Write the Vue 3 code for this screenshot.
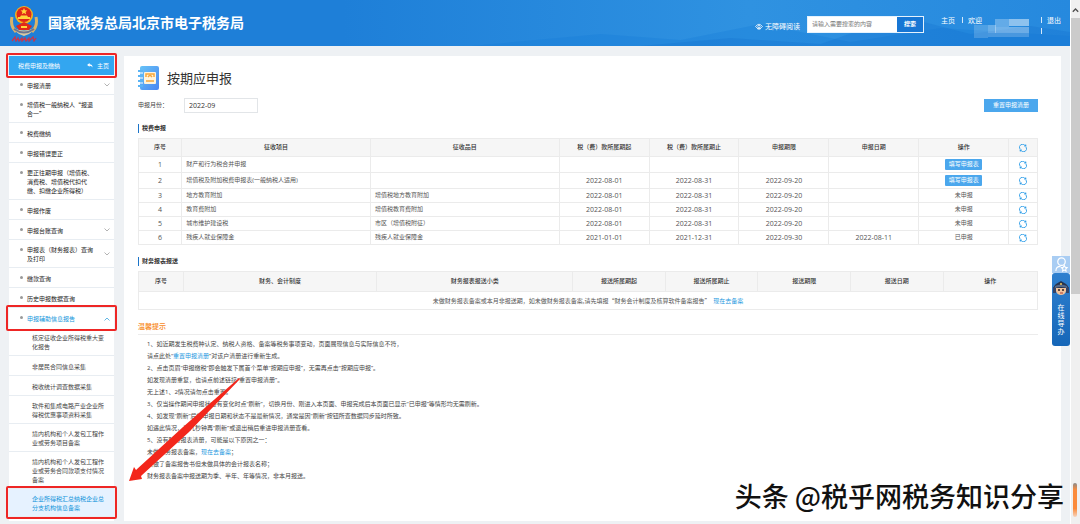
<script setup>
import { ref } from 'vue'

const month = ref('2022-09')
const keyword = ref('')

const menu = [
  { lines: ['申报清册'], arrow: 'down' },
  { lines: ['增值税一般纳税人“报退', '合一”'] },
  { lines: ['税费缴纳'] },
  { lines: ['申报错误更正'] },
  { lines: ['更正往期申报（增值税、', '消费税、增值税代扣代', '缴、扣缴企业所得税）'] },
  { lines: ['申报作废'] },
  { lines: ['申报台账查询'], arrow: 'down' },
  { lines: ['申报表（财务报表）查询', '及打印'], arrow: 'down' },
  { lines: ['缴款查询'] },
  { lines: ['历史申报数据查询'] },
  { lines: ['申报辅助信息报告'], arrow: 'up', open: true, marked: true },
]

const submenu = [
  { lines: ['核定征收企业所得税重大变', '化报告'] },
  { lines: ['非居民合同信息采集'] },
  { lines: ['税收统计调查数据采集'] },
  { lines: ['软件和集成电路产业企业所', '得税优惠事项资料采集'] },
  { lines: ['境内机构和个人发包工程作', '业或劳务项目备案'] },
  { lines: ['境内机构和个人发包工程作', '业或劳务合同款项支付情况', '备案'] },
  { lines: ['企业所得税汇总纳税企业总', '分支机构信息备案'], active: true },
]

const taxHead = ['序号', '征收项目', '征收品目', '税（费）款所属期起', '税（费）款所属期止', '申报期限', '申报日期', '操作']
const taxRows = [
  { item: '财产和行为税合并申报', sub: '', from: '', to: '', due: '', date: '', action: true },
  { item: '增值税及附加税费申报表(一般纳税人适用)', sub: '', from: '2022-08-01', to: '2022-08-31', due: '2022-09-20', date: '', action: true },
  { item: '地方教育附加', sub: '增值税地方教育附加', from: '2022-08-01', to: '2022-08-31', due: '2022-09-20', date: '', state: '未申报' },
  { item: '教育费附加', sub: '增值税教育费附加', from: '2022-08-01', to: '2022-08-31', due: '2022-09-20', date: '', state: '未申报' },
  { item: '城市维护建设税', sub: '市区（增值税附征）', from: '2022-08-01', to: '2022-08-31', due: '2022-09-20', date: '', state: '未申报' },
  { item: '残疾人就业保障金', sub: '残疾人就业保障金', from: '2021-01-01', to: '2021-12-31', due: '2022-09-30', date: '2022-08-11', state: '已申报' },
]

const reportHead = ['序号', '财务、会计制度', '财务报表报送小类', '报送所属期起', '报送所属期止', '报送期限', '报送日期', '操作']
</script>

<template>
  <div class="page">
    <div class="view">
      <header class="top">
        <svg class="hills" viewBox="0 0 600 46" preserveAspectRatio="none" aria-hidden="true">
          <path d="M0 46 L130 34 L210 40 L290 24 L380 42 L470 28 L600 36 V46Z" fill="#1479d6" opacity=".3" />
          <path d="M170 46 L260 38 L350 44 L430 16 L500 34 L560 26 L600 32 V46Z" fill="#0f6dcc" opacity=".25" />
        </svg>
        <svg class="emblem" viewBox="0 0 30 38" aria-hidden="true">
          <path d="M2 19 Q4 29 15 32 Q26 29 28 19 L25 24 Q15 29 5 24Z" fill="#d9c8a3" />
          <path d="M3 13 Q1 22 7 28 M27 13 Q29 22 23 28" stroke="#d8b36a" stroke-width="3" fill="none" />
          <path d="M5 25 Q15 32 25 25" stroke="#6b7590" stroke-width="2" fill="none" />
          <circle cx="15" cy="11" r="9" fill="#f3b51f" />
          <circle cx="15" cy="10.500" r="7.500" fill="#e02819" />
          <path d="M15 4 l1 2.200 2.400 .2 -1.800 1.600 .6 2.300 -2.200 -1.200 -2.200 1.200 .6 -2.300 -1.800 -1.600 2.400 -.2z" fill="#ffd53b" />
          <path d="M9 15 H21 V13 H19 L18 11.500 H12 L11 13 H9Z" fill="#ffd53b" />
          <path d="M7 22 L15 18 L23 22 L20 26 H10Z" fill="#e02819" />
          <path d="M12 23 h6" stroke="#ffd53b" stroke-width="2" />
          <path d="M3 37 l3 -4 1 4 2 -3 1 3 3 -3 0 3 3 -3 1 3 3 -3 0 3 4 -4 1 4 2 -3" stroke="#c5364f" stroke-width="1.300" fill="none" />
        </svg>
        <h1>国家税务总局北京市电子税务局</h1>
        <a class="access" href="#">
          <svg viewBox="0 0 16 14" aria-hidden="true"><path d="M1 7 Q8 -2 15 7 Q8 16 1 7Z M4 11 Q8 14 12 11" fill="none" stroke="#fff" stroke-width="1.500" /><circle cx="8" cy="7" r="2.500" fill="none" stroke="#fff" stroke-width="1.500" /></svg>
          无障碍阅读
        </a>
        <form class="search" @submit.prevent>
          <input v-model="keyword" type="text" placeholder="请输入需要搜索的内容" aria-label="搜索内容" />
          <button type="submit">搜索</button>
        </form>
        <nav class="user">
          <a href="#">主页</a><i class="bar"></i><span class="hello">欢迎</span>
          <svg class="mosaic" viewBox="0 0 62 22" aria-hidden="true">
            <g fill="#fff">
              <path d="M21 3h14v8H21z" opacity=".28" /><path d="M35 3h20v7H35z" opacity=".48" />
              <path d="M0 9h14v13H0z" opacity=".18" /><path d="M14 9h8v8h-8z" opacity=".3" />
              <path d="M21 11h34v6H21z" opacity=".34" /><path d="M14 17h41v4H14z" opacity=".2" />
            </g>
          </svg>
          <span class="bars"><i class="bar"></i><i class="bar"></i></span><a href="#">退出</a>
        </nav>
      </header>

      <div class="body">
        <aside class="side">
          <div class="side-title marked">
            <span>税费申报及缴纳</span>
            <a href="#"><svg viewBox="0 0 14 12" aria-hidden="true"><path d="M6 0 L0 5 L6 9 V6.500 Q11 6 13 11 Q13 3 6 3Z" fill="#fff" /></svg>主页</a>
          </div>
          <ul>
            <li v-for="m in menu" :key="m.lines[0]" :class="{ open: m.open, marked: m.marked }">
              <a href="#"><span v-for="l in m.lines" :key="l">{{ l }}</span></a>
              <svg v-if="m.arrow" class="chev" viewBox="0 0 12 8" aria-hidden="true">
                <path :d="m.arrow === 'up' ? 'M1 7 L6 2 L11 7' : 'M1 1 L6 6 L11 1'" fill="none" stroke="currentColor" stroke-width="1.500" />
              </svg>
            </li>
          </ul>
          <ul class="sub">
            <li v-for="(m, i) in submenu" :key="i" :class="{ active: m.active, marked: m.active }">
              <a href="#"><span v-for="l in m.lines" :key="l">{{ l }}</span></a>
            </li>
          </ul>
        </aside>

        <main class="panel">
          <div class="title">
            <svg viewBox="0 0 22 24" aria-hidden="true">
              <defs><linearGradient id="book" x1="0" y1="0" x2="1" y2="1"><stop offset="0" stop-color="#67c3f7" /><stop offset="1" stop-color="#4a86f2" /></linearGradient></defs>
              <path d="M4 0 H19 Q21 0 21 2 V22 Q21 24 19 24 H4 Q2 24 2 22 V2 Q2 0 4 0Z" fill="url(#book)" />
              <path d="M0 5h5M0 10h5M0 15h5M0 20h5" stroke="#5ab4f5" stroke-width="2" />
              <path d="M2 7h3M2 12h3M2 17h3" stroke="#fff" stroke-width="1" />
              <rect x="6" y="6" width="12" height="12" rx="1" fill="#fff4dc" />
              <path d="M8 11 V8 H16 V11 M10 11 Q12 8 14 11 M8 15 H16" stroke="#f6a63b" stroke-width="1.500" fill="none" />
            </svg>
            <h2>按期应申报</h2>
          </div>
          <div class="filter">
            <label for="month">申报月份：</label>
            <input id="month" v-model="month" type="text" />
            <button type="button">重置申报清册</button>
          </div>

          <h3>税费申报</h3>
          <table class="tax">
            <colgroup>
              <col class="w43" /><col class="w189" /><col class="w189" /><col class="w90" /><col class="w90" /><col class="w90" /><col class="w90" /><col class="w90" /><col />
            </colgroup>
            <thead>
              <tr>
                <th v-for="h in taxHead" :key="h">{{ h }}</th>
                <th><button class="refresh" type="button" aria-label="刷新"><svg viewBox="0 0 16 16"><path d="M2 10 A6 6 0 0 1 12 3 M14 6 A6 6 0 0 1 4 13" fill="none" stroke="#2d9de8" stroke-width="1.800" /><path d="M10 5 L15 5 L14 0Z M6 11 L1 11 L2 16Z" fill="#2d9de8" /></svg></button></th>
              </tr>
            </thead>
            <tbody>
              <tr v-for="(r, i) in taxRows" :key="i" :class="{ tall: r.action }">
                <td class="num">{{ i + 1 }}</td>
                <td class="left">{{ r.item }}</td>
                <td class="left">{{ r.sub }}</td>
                <td class="num">{{ r.from }}</td>
                <td class="num">{{ r.to }}</td>
                <td class="num">{{ r.due }}</td>
                <td class="num">{{ r.date }}</td>
                <td><button v-if="r.action" class="fill" type="button">填写申报表</button><template v-else>{{ r.state }}</template></td>
                <td><button class="refresh" type="button" aria-label="刷新"><svg viewBox="0 0 16 16"><path d="M2 10 A6 6 0 0 1 12 3 M14 6 A6 6 0 0 1 4 13" fill="none" stroke="#2d9de8" stroke-width="1.800" /><path d="M10 5 L15 5 L14 0Z M6 11 L1 11 L2 16Z" fill="#2d9de8" /></svg></button></td>
              </tr>
            </tbody>
          </table>

          <h3 class="second">财务报表报送</h3>
          <table class="report">
            <colgroup>
              <col class="w45" /><col class="w194" /><col class="w196" /><col class="w93" /><col class="w93" /><col class="w93" /><col class="w93" /><col />
            </colgroup>
            <thead><tr><th v-for="h in reportHead" :key="h">{{ h }}</th></tr></thead>
            <tbody>
              <tr><td colspan="8">未做财务报表备案或本月非报送期，如未做财务报表备案,请先填报“财务会计制度及核算软件备案报告”&nbsp; <a href="#">现在去备案</a></td></tr>
            </tbody>
          </table>

          <h4>温馨提示</h4>
          <div class="tips">
            <p>1、如近期发生税费种认定、纳税人资格、备案等税务事项变动，页面展现信息与实际信息不符，</p>
            <p>请点此处“<a href="#">重置申报清册</a>”对该户清册进行重新生成。</p>
            <p>2、点击页眉“申报缴税”即会触发下属首个菜单“按期应申报”，无需再点击“按期应申报”。</p>
            <p>如发现清册重复，也请点前述链接“重置申报清册”。</p>
            <p>无上述1、2情况请勿点击重置。</p>
            <p>3、仅当操作期间申报状态有变化时点“刷新”，切换月份、刚进入本页面、申报完成后本页面已显示“已申报”等情形均无需刷新。</p>
            <p>4、如发现“刷新”后的申报日期和状态不是最新情况，通常是因“刷新”按钮所查数据同步延时所致。</p>
            <p>如遇此情况，请几秒钟再“刷新”或退出稍后重进申报清册查看。</p>
            <p>5、没有财务报表清册，可能是以下原因之一：</p>
            <p>未做财务报表备案，<a href="#">现在去备案</a>；</p>
            <p>只做了备案报告书但未做具体的会计报表名称；</p>
            <p>财务报表备案中报送期为季、半年、年等情况，非本月报送。</p>
          </div>
          <svg class="pointer" viewBox="0 0 112 104" aria-hidden="true">
            <path d="M110 0 L111 1 L60 54 L12 98 L13 101 L0 103 L5 89 L7 92 L54 49Z" fill="#f3261b" />
          </svg>
        </main>
      </div>

      <div class="helper">
        <a class="person" href="#" aria-label="个人中心"><svg viewBox="0 0 16 16"><circle cx="8" cy="5" r="4" fill="none" stroke="#fff" stroke-width="1.300" /><path d="M2 15 Q2 10 7 10 M11 9 l1 2 2 .3 -1.500 1.500 .3 2.200 -1.800 -1 -1.800 1 .3 -2.200 -1.500 -1.500 2 -.3z" fill="none" stroke="#fff" stroke-width="1.200" /></svg></a>
        <a class="online" href="#">
          <svg viewBox="0 0 18 18" aria-hidden="true">
            <path d="M2 12 Q1 8 4 6 L9 3 L14 6 Q17 8 16 12Z" fill="#29344c" />
            <path d="M1 9h3v6H1zM14 9h3v6h-3z" fill="#334367" />
            <path d="M4 10 H14 V13 Q13 17 9 17 Q5 17 4 13Z" fill="#f0c29b" />
            <path d="M3 8 Q9 5 15 8 V10 Q9 8 3 10Z" fill="#54698a" />
            <path d="M6 12h2M10 12h2" stroke="#2b2020" stroke-width="1.500" /><path d="M8 15h3" stroke="#b03c30" />
            <circle cx="9" cy="6" r="1" fill="#f1c75c" />
          </svg>
          <span>在</span><span>线</span><span>导</span><span>办</span>
        </a>
      </div>
      <div class="watermark">头条 @税乎网税务知识分享</div>
    </div>

    <div class="scroll" aria-hidden="true">
      <svg class="up" viewBox="0 0 10 18"><path d="M2 12 L5 9 L8 12" fill="none" stroke="#505050" stroke-width="1.500" /></svg>
      <div class="thumb"></div>
      <div class="pen"></div>
    </div>
  </div>
</template>

<style>
body { margin: 0; }
</style>

<style scoped>
* { box-sizing: border-box; }
.page {
  display: grid;
  grid-template-columns: minmax(0, 1fr) 10px;
  min-height: 100vh;
  font: 6px/9px "Open Sans", "Noto Sans CJK SC", sans-serif;
  color: #444;
  background: #eef1f4;
}
a { color: #1c97e0; text-decoration: none; }
button { font: inherit; border: 0; padding: 0; cursor: pointer; color: #fff; }
input { font: inherit; }
h1, h2, h3, h4, p, ul { margin: 0; padding: 0; }
ul { list-style: none; }
.view { position: relative; display: flex; flex-direction: column; min-width: 0; }

.top {
  position: relative;
  display: flex;
  align-items: center;
  height: 46px;
  padding: 0 9px;
  color: #fff;
  background: linear-gradient(90deg, #1e7fd8 0 32%, #2f92e1 70%, #2689de);
}
.top > * { position: relative; }
.top a { color: #fff; }
.top .hills { position: absolute; right: 0; top: 0; width: 56%; height: 100%; }
.emblem { width: 30px; height: 38px; margin-right: 9px; }
.top h1 { font-size: 14px; line-height: 20px; font-weight: 700; white-space: nowrap; }
.access { display: flex; align-items: center; gap: 2px; margin: 6px 7px 0 auto; font-size: 7px; white-space: nowrap; }
.access svg { width: 8px; height: 7px; }
.search { display: flex; width: 117px; height: 17px; margin-top: 2px; border: 1px solid #e5f2fd; background: #fff; }
.search input { flex: 1; min-width: 0; border: 0; padding: 0 4px; outline: 0; background: #fff; color: #555; }
.search input::placeholder { color: #777; opacity: 1; }
.search button { width: 26px; background: #1776d4; font-weight: 700; }
.user { display: flex; align-items: flex-start; height: 32px; margin-left: 17px; padding-top: 9px; font-size: 7px; white-space: nowrap; }
.bar { display: block; width: 1px; height: 6px; margin: 1px 5px 0 7px; background: #d4e8fa; }
.bars .bar { margin: 1px 5px 5px 7px; }
.mosaic { width: 62px; height: 22px; margin: 0 -2px 0 -8px; }

.body { flex: 1; display: flex; gap: 10px; padding: 10px 9px 3px; }
.side { width: 105px; flex: none; background: #fff; font-family: "Noto Sans CJK SC", sans-serif; }
.side-title { display: flex; justify-content: space-between; align-items: center; height: 19px; padding: 0 5px 0 9px; color: #fff; background: #33a6f0; }
.side-title a { display: flex; align-items: center; gap: 4px; color: #fff; }
.side-title svg { width: 6px; height: 5px; }
.side li { position: relative; display: flex; justify-content: space-between; align-items: center; min-height: 20px; padding: 5px 4px 4px 18px; border-bottom: 1px solid #e8edf2; }
.side li::before { content: ""; position: absolute; left: 11px; top: 8px; width: 3px; height: 3px; border-radius: 50%; background: #999; }
.side li a { color: #222; white-space: nowrap; }
.side li span { display: block; }
.side li.open { border-bottom: 0; }
.side li.open a { color: #1295db; }
.chev { width: 6px; height: 4px; flex: none; color: #999; }
.open .chev { color: #2f9fdc; }
.sub li { padding-left: 23px; }
.sub li::before { display: none; }
.sub li a { color: #444; }
.sub li.active { background: #e6f2ff; }
.sub li.active a { color: #1295db; }
.marked { position: relative; }
.marked::after { content: ""; position: absolute; inset: -3px; border: 2px solid #ee2625; border-radius: 2px; z-index: 2; }

.panel { position: relative; flex: 1; min-width: 0; padding: 10px 23px 0 14px; background: #fff; }
.title { display: flex; align-items: center; gap: 7px; height: 24px; }
.title svg { width: 22px; height: 24px; }
.title h2 { font-size: 13px; line-height: 20px; font-weight: 400; color: #333; }
.filter { display: flex; align-items: center; height: 15px; margin: 8px 0 11px; }
.filter label { width: 46px; }
.filter input { width: 74px; height: 15px; padding: 0 4px; border: 1px solid #e2e5e8; color: #333; font-size: 7px; }
.filter button { width: 54px; height: 13px; margin-left: auto; background: #4ba7ed; }
h3 { margin-bottom: 5px; padding-left: 3px; border-left: 1px solid #1b74c9; font-size: 6px; line-height: 9px; font-weight: 700; color: #333; }
h3.second { margin: 12px 0 5px; }

table { width: 100%; border-collapse: collapse; table-layout: fixed; border: 1px solid #e8e8e8; }
th, td { padding: 0 4px; border: 1px solid #ebebeb; text-align: center; font-weight: 400; line-height: 9px; white-space: nowrap; }
th { height: 18px; background: #f6f6f6; color: #333; font-weight: 500; }
td { height: 14px; color: #555; }
.tall td { height: 16px; }
td.left { text-align: left; }
td.num { font-size: 7px; }
.w43 { width: 4.8%; }
.w189 { width: 21%; }
.w90 { width: 10%; }
.w45 { width: 5%; }
.w194 { width: 21.500%; }
.w196 { width: 21.800%; }
.w93 { width: 10.300%; }
.fill { display: block; width: 37px; height: 11px; margin: 0 auto; border-radius: 1px; background: #4ba7ed; line-height: 11px; }
.refresh { display: block; width: 8px; height: 8px; margin: 0 auto; background: none; }
.refresh svg { display: block; width: 8px; height: 8px; }
.report th { height: 20px; }
.report td { height: 18px; font-family: "Noto Sans CJK SC", sans-serif; }

h4 { margin-top: 11px; padding-bottom: 2px; border-bottom: 1px solid #ececec; font-size: 7px; line-height: 11px; font-weight: 500; color: #f78a1d; }
.tips { padding: 3px 0 0 9px; line-height: 12px; color: #444; }
.tips p { white-space: nowrap; }
.pointer { position: absolute; left: 5px; top: 322px; width: 112px; height: 104px; }

.helper { position: absolute; right: 0; top: 256px; width: 18px; }
.person { display: flex; justify-content: center; align-items: center; height: 17px; background: #a9cdf3; }
.person svg { width: 15px; height: 15px; }
.online { display: flex; flex-direction: column; align-items: center; height: 73px; border-radius: 3px; background: linear-gradient(#2f80cf, #1566b8); color: #fff; font-size: 7px; line-height: 8px; padding-top: 5px; }
.online svg { width: 18px; height: 18px; margin-bottom: 8px; }
.watermark {
  position: absolute;
  right: 6px;
  bottom: 10px;
  font-family: "Noto Sans CJK SC", sans-serif;
  font-size: 27px;
  font-weight: 500;
  line-height: 36px;
  white-space: nowrap;
  color: #111;
  text-shadow: -1px -1px 0 #fff;
}

.scroll { position: relative; display: flex; flex-direction: column; background: #f0f0f0; border-left: 1px solid #fff; }
.up { width: 9px; height: 18px; }
.thumb { height: 276px; background: #cbcbcb; }
.pen { width: 4px; height: 34px; margin: auto auto 7px 2px; border-radius: 2px; background: linear-gradient(#8a8a8a, #fb8b3c 20% 75%, #f6d4bd); }
</style>
